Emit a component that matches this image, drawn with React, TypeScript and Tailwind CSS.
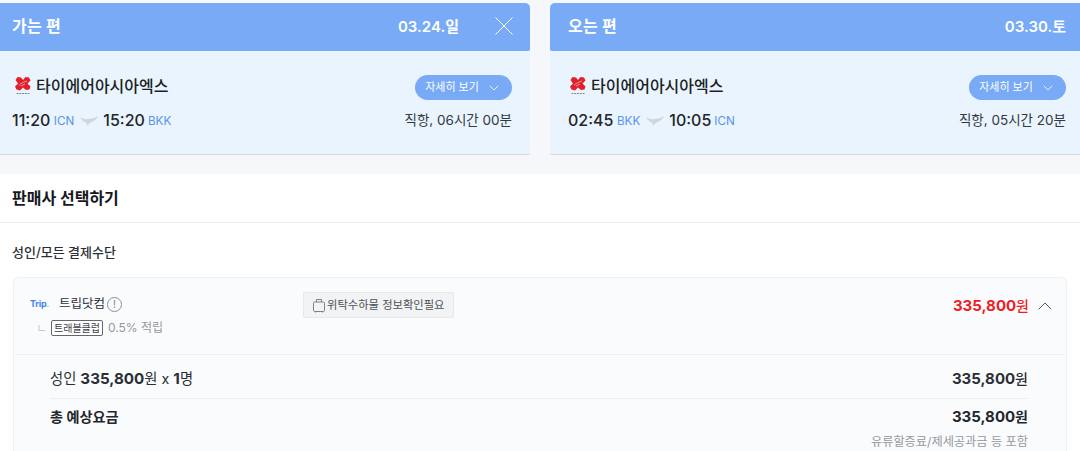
import { ChevronDown, ChevronUp } from "lucide-react";

const font = { fontFamily: 'Inter, "Noto Sans CJK KR", sans-serif' };

function AirLogo() {
  return (
    <svg width="18" height="20" viewBox="0 0 18 20" className="shrink-0">
      <path
        d="M3.5 1 L7 1.5 L9 4 L11.5 1 L15 1.5 L16.5 4.5 L13.5 7.5 L16.5 10.5 L15.5 13.5 L12 14 L9 11.5 L6 14.5 L2.5 13.5 L1 10.5 L4 7.5 L1.5 4 Z"
        fill="#e3202a"
      />
      <path d="M5 9.5 C7 7 10 6 13 5 M7 10 L11 8" stroke="#f4a6ab" strokeWidth="0.9" fill="none" />
      <path d="M2.5 17.5 H15.5" stroke="#6b6b6b" strokeWidth="0.8" strokeDasharray="2 0.8" />
    </svg>
  );
}

function Plane() {
  return (
    <svg width="18" height="12" viewBox="0 0 18 12" className="shrink-0">
      <path d="M0 2.5 L5 4.3 L11 3.8 C14 3 16.5 1.8 18 1.2 C17 4 14 6.2 10.5 7.4 L6.5 11 L6.8 8 C4 7.4 2 5.4 0 2.5 Z" fill="#cfd5da" />
    </svg>
  );
}

function Leg(props: {
  title: string;
  date: string;
  close?: boolean;
  from: string;
  fromCode: string;
  to: string;
  toCode: string;
  duration: string;
  rounded: string;
  inset: string;
  logoPad: string;
}) {
  return (
    <section className={"flex-1 h-[152px] bg-[#e9f4fe] border-b border-[#d5dadf] " + props.rounded}>
      <header className={"h-12 bg-[#78aaf6] flex items-center text-white " + props.rounded + " " + props.inset}>
        <h2 className="text-[16px] font-semibold tracking-[0.2px] mb-[2px]">{props.title}</h2>
        <span className="ml-auto text-[15px] font-semibold">{props.date}</span>
        {props.close && (
          <svg width="18" height="18" viewBox="0 0 18 18" className="ml-[36px] mr-[-1px] mb-[2px]">
            <path d="M0.5 0.5 L17.5 17.5 M17.5 0.5 L0.5 17.5" stroke="#fff" strokeWidth="1" fill="none" />
          </svg>
        )}
      </header>
      <div className={"pt-[24px] flex justify-between " + props.inset}>
        <div>
          <div className={"flex items-center gap-[4px] h-[22px] text-[#1c1f24] text-[16px] font-medium " + props.logoPad}>
            <AirLogo />
            <span>타이에어아시아엑스</span>
          </div>
          <div className="flex items-center mt-[11px] h-[24px] text-[#22262b]">
            <span className="text-[16px] font-medium">{props.from}</span>
            <span className="text-[11.7px] text-[#5b93e8] ml-[3.5px] mt-[4px]">{props.fromCode}</span>
            <span className="ml-[6px] mr-[5px] mt-[2px]"><Plane /></span>
            <span className="text-[16px] font-medium">{props.to}</span>
            <span className="text-[11.7px] text-[#5b93e8] ml-[3px] mt-[4px]">{props.toCode}</span>
          </div>
        </div>
        <div className="flex flex-col items-end">
          <button className="h-[25px] w-[97px] rounded-full bg-[#78aaf6] text-white text-[11px] flex items-center justify-center gap-[7px]">
            자세히 보기 <ChevronDown size={16} strokeWidth={1.2} />
          </button>
          <div className="mt-[8px] h-[24px] flex items-center text-[13.5px] text-[#333840]">{props.duration}</div>
        </div>
      </div>
    </section>
  );
}

export default function App() {
  return (
    <div style={font} className="w-[1080px] h-[451px] overflow-hidden bg-white">
      <div className="bg-[#f5f7fa] pt-[3px] h-[174px] flex gap-5">
        <Leg
          title="가는 편"
          date="03.24.일"
          close
          from="11:20"
          fromCode="ICN"
          to="15:20"
          toCode="BKK"
          duration="직항, 06시간 00분"
          rounded="rounded-tr-[5px] rounded-br-[2px]"
          inset="pl-3 pr-[18px]"
          logoPad="pl-[2px]"
        />
        <Leg
          title="오는 편"
          date="03.30.토"
          from="02:45"
          fromCode="BKK"
          to="10:05"
          toCode="ICN"
          duration="직항, 05시간 20분"
          rounded="rounded-tl-[5px] rounded-bl-[2px]"
          inset="pl-[18px] pr-[14px]"
          logoPad="pl-[1px]"
        />
      </div>

      <h1 className="h-[49px] border-b border-[#eceef0] pl-3 flex items-center text-[16px] font-bold text-[#15181c]">
        판매사 선택하기
      </h1>

      <h2 className="pl-3 mt-[19px] h-[22px] flex items-center text-[13px] font-medium text-[#2b2f35]">
        성인/모든 결제수단
      </h2>

      <div className="mx-[13px] mt-[13px] rounded-t-[6px] border border-[#eef0f3] bg-[#fafbfd] h-[200px]">
        <div className="h-[77px] border-b border-[#eef0f3] pl-[16px] pr-[14px] pt-[14px] flex items-start">
          <div className="w-[273px]">
            <div className="flex items-center h-[22px] mt-[1px]">
              <span className="w-[29px] text-[9px] font-bold text-[#3f86e8] tracking-[-0.2px]">
                Trip<span className="text-[#f5b53d]">.</span>
              </span>
              <span className="text-[12.5px] text-[#2d3137]">트립닷컴</span>
              <span className="ml-[2px] w-[15px] h-[15px] rounded-full border border-[#8b9096] text-[10px] leading-none text-[#7d8288] flex items-center justify-center">!</span>
            </div>
            <div className="flex items-center h-[20px] mt-[3px] pl-[8px]">
              <svg width="8" height="8" viewBox="0 0 8 8" className="mr-[5px] mb-[1px]">
                <path d="M1 1 V6.5 H7" stroke="#c3c8ce" fill="none" />
              </svg>
              <span className="h-[16px] px-[2px] border border-[#62676d] rounded-[2px] text-[10px] leading-[14px] text-[#3c4046] bg-white">트래블클럽</span>
              <span className="ml-[5px] text-[12px] text-[#94999f]">0.5% 적립</span>
            </div>
          </div>
          <div className="h-[26px] pl-[8px] pr-[8px] bg-[#f2f3f5] border border-[#e6e8eb] rounded-[2px] flex items-center gap-[1px] text-[11.3px] text-[#4c5157]">
            <svg width="14" height="15" viewBox="0 0 14 15" className="shrink-0">
              <rect x="1.5" y="4" width="11" height="9.5" rx="1.2" fill="none" stroke="#7d8288" />
              <path d="M4.5 4 V1.5 H9.5 V4 M3.5 13.5 V14.5 M10.5 13.5 V14.5" fill="none" stroke="#7d8288" />
            </svg>
            위탁수하물 정보확인필요
          </div>
          <div className="ml-auto flex items-center h-[24px] pt-[4px]">
            <span className="text-[15px] font-bold text-[#ee1c25]">
              335,800<span className="font-medium text-[14px]">원</span>
            </span>
            <ChevronUp className="ml-[4px] -mr-[5px]" size={24} strokeWidth={1} color="#555a60" />
          </div>
        </div>

        <div className="pl-[36px] pr-[38px]">
          <div className="h-[44px] border-b border-[#eceef0] flex items-center justify-between text-[#2b2f35] pt-[5px]">
            <span className="text-[14.3px]">
              성인 <b className="text-[15.2px] font-bold">335,800</b>원 x <b className="text-[15.2px] font-bold">1</b>명
            </span>
            <span className="text-[15px] font-bold text-[#2b2f35]">
              335,800<span className="font-medium text-[14px]">원</span>
            </span>
          </div>
          <div className="flex justify-between pt-[6px]">
            <span className="text-[14.2px] font-bold text-[#23272c] leading-[24px]">총 예상요금</span>
            <div className="text-right">
              <div className="text-[15px] font-bold text-[#23272c] leading-[24px]">
                335,800<span className="text-[14px]">원</span>
              </div>
              <div className="text-[12.2px] text-[#94999f] mt-[4px] leading-[18px]">유류할증료/제세공과금 등 포함</div>
            </div>
          </div>
        </div>
      </div>
    </div>
  );
}
